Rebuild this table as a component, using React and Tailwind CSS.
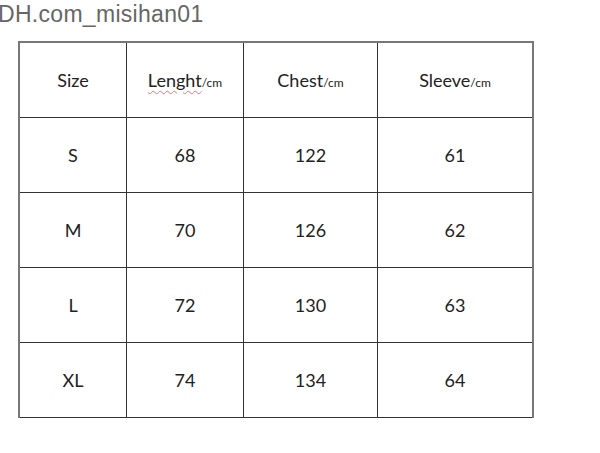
const rows = [
  ["S", "68", "122", "61"],
  ["M", "70", "126", "62"],
  ["L", "72", "130", "63"],
  ["XL", "74", "134", "64"],
];

function Cell({ children, last }) {
  return (
    <div
      className={
        "flex h-[75px] items-center justify-center border-b border-[#333] " +
        (last ? "" : "border-r")
      }
    >
      <span>{children}</span>
    </div>
  );
}

function Unit() {
  return <span className="text-[12px]">/cm</span>;
}

export default function App() {
  return (
    <div className="h-[453px] w-[600px] overflow-hidden bg-white">
      <div className="-ml-[2px] pt-[1px] text-[23px] leading-[27px] tracking-[0.3px] text-[#666] [font-family:'Liberation_Sans',Arial,sans-serif]">
        DH.com_misihan01
      </div>
      <div className="ml-[18px] mt-[13px] w-[516px] border-x-2 border-t-2 border-[#777] [font-family:Lato,'Open_Sans',sans-serif] text-[18px] text-[#222]">
        <div className="grid grid-cols-[107px_117px_134px_154px]">
          <Cell>Size</Cell>
          <Cell>
            <span className="underline decoration-wavy decoration-[#d77] decoration-1 underline-offset-[3px]">
              Lenght
            </span>
            <Unit />
          </Cell>
          <Cell>
            Chest
            <Unit />
          </Cell>
          <Cell last>
            Sleeve
            <Unit />
          </Cell>
          {rows.map((r, i) =>
            r.map((v, j) => (
              <Cell key={i + "-" + j} last={j === 3}>
                {v}
              </Cell>
            ))
          )}
        </div>
      </div>
    </div>
  );
}
